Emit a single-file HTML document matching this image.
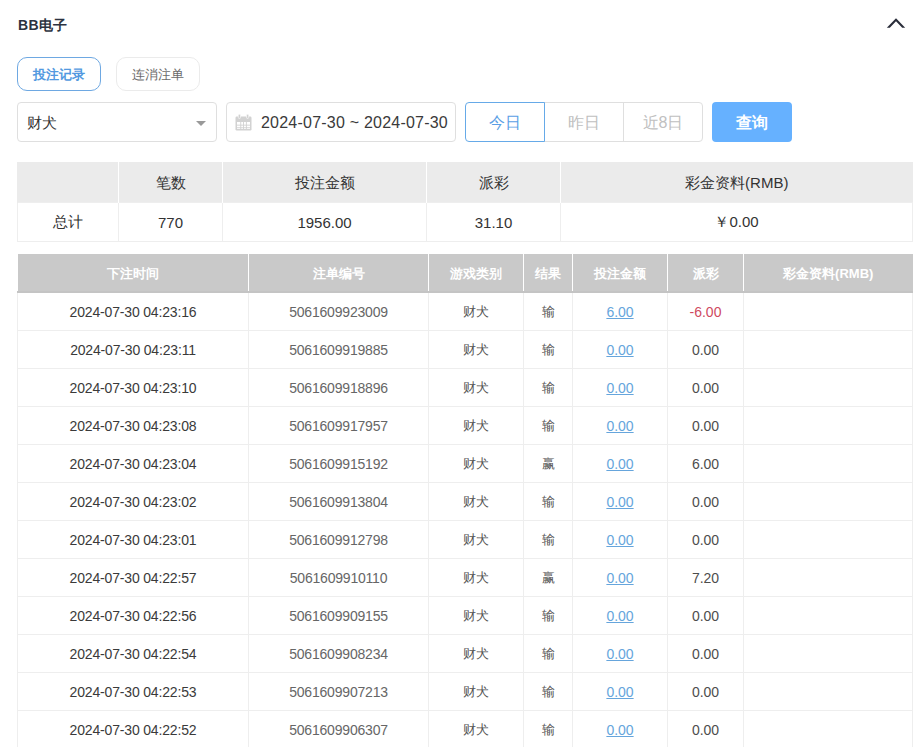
<!DOCTYPE html>
<html><head><meta charset="utf-8">
<style>
*{box-sizing:border-box;margin:0;padding:0}
html,body{width:916px;height:747px;overflow:hidden;background:#fff;font-family:"Liberation Sans",sans-serif;color:#333}
.abs{position:absolute}
.title{left:18px;top:15px;font-size:14px;font-weight:bold;letter-spacing:0.3px;color:#2c3240;line-height:20px}
.chev{left:886px;top:17px}
.tab{top:57px;width:84px;height:34px;border-radius:10px;font-size:13px;line-height:33px;text-align:center}
.tab1{left:17px;border:1px solid #6ea8e2;color:#5299e0;font-weight:bold}
.tab2{left:116px;border:1px solid #ebebeb;color:#6a6a6a}
.sel{left:17px;top:102px;width:200px;height:40px;border:1px solid #dfdfdf;border-radius:4px;font-size:15px;line-height:39px;padding-left:9px;color:#333}
.tri{left:196px;top:121px;width:0;height:0;border-left:5px solid transparent;border-right:5px solid transparent;border-top:5px solid #999}
.date{left:226px;top:102px;width:230px;height:40px;border:1px solid #dfdfdf;border-radius:4px}
.datetxt{left:261px;top:103px;font-size:16px;line-height:40px;color:#3a3a3a;white-space:nowrap;letter-spacing:0.22px}
.seg{top:102px;height:40px;font-size:16px;line-height:40px;text-align:center;color:#c0c0c0;border:1px solid #dfdfdf}
.query{left:712px;top:102px;width:80px;height:40px;border-radius:4px;background:#66b1ff;color:#fff;font-size:16px;line-height:41px;text-align:center;font-weight:bold}
table{border-collapse:collapse;table-layout:fixed;position:absolute;left:17px;width:895px}
td,th{text-align:center;white-space:nowrap;padding:0}
.sum{top:162px}
.sum th{background:#ebebeb;height:40px;font-weight:normal;font-size:15px;color:#333;border-left:1px solid #fff;padding-top:4px}
.sum th:first-child{border-left:1px solid #ebebeb}
.sum td{height:39px;font-size:15px;color:#333;border:1px solid #eeeeee;padding-top:1px}
.main{top:254px}
.main th{background:#c9c9c9;height:38px;font-size:13px;color:#fff;border-left:1px solid #fff;padding-top:3px;border-bottom:2px solid #c4c4c4}
.main th:first-child{border-left:none}
.main td{height:38px;font-size:14px;color:#333;border:1px solid #eeeeee;padding-top:2px}
.main td.dt{letter-spacing:-0.17px}
.main td.id{color:#666;letter-spacing:-0.2px}
.main td.cn{font-size:13px;color:#555}
.main td.dt{color:#3a3a3a}
.main td a{color:#66a5dc;text-decoration:underline}
.main td.po{color:#4d4d4d}
.neg{color:#cf4a5f !important}
</style></head><body>
<div class="abs title">BB电子</div>
<svg class="abs" style="left:876px;top:10px" width="40" height="30" viewBox="0 0 40 30"><polygon points="10.8,17.8 20,8.2 29.2,17.8 26.2,17.8 20,11.3 13.8,17.8" fill="#2a2d3a"/></svg>
<div class="abs tab tab1">投注记录</div>
<div class="abs tab tab2">连消注单</div>

<div class="abs sel">财犬</div>
<div class="abs tri"></div>
<div class="abs date"></div>
<svg class="abs" style="left:235px;top:114px" width="17" height="17" viewBox="0 0 17 17">
<rect x="0.5" y="2.5" width="16" height="14" rx="1.2" fill="#d2d2d2"/>
<rect x="2" y="8" width="13" height="7" fill="#fff"/>
<rect x="2" y="8" width="13" height="7" fill="none"/>
<g fill="#d2d2d2"><rect x="2" y="10.7" width="13" height="0.9"/><rect x="2" y="13.3" width="13" height="0.9"/><rect x="5.3" y="8" width="0.9" height="7"/><rect x="8.1" y="8" width="0.9" height="7"/><rect x="10.9" y="8" width="0.9" height="7"/></g>
<rect x="3.3" y="0.3" width="2.2" height="4.2" rx="1.1" fill="#d2d2d2" stroke="#fff" stroke-width="0.6"/>
<rect x="11.5" y="0.3" width="2.2" height="4.2" rx="1.1" fill="#d2d2d2" stroke="#fff" stroke-width="0.6"/>
</svg>
<div class="abs datetxt">2024-07-30 ~ 2024-07-30</div>
<div class="abs seg" style="left:465px;width:80px;border-color:#66aae8;color:#5a9fe6;border-radius:4px 0 0 4px;z-index:2">今日</div>
<div class="abs seg" style="left:544px;width:80px;border-left:none;border-right:none">昨日</div>
<div class="abs seg" style="left:623px;width:80px;border-radius:0 4px 4px 0">近8日</div>
<div class="abs query">查询</div>

<table class="sum">
<colgroup><col style="width:101px"><col style="width:104px"><col style="width:204px"><col style="width:134px"><col style="width:352px"></colgroup>
<tr><th></th><th>笔数</th><th>投注金额</th><th>派彩</th><th>彩金资料(RMB)</th></tr>
<tr><td>总计</td><td>770</td><td>1956.00</td><td>31.10</td><td>￥0.00</td></tr>
</table>

<table class="main">
<colgroup><col style="width:231px"><col style="width:180px"><col style="width:95px"><col style="width:49px"><col style="width:95px"><col style="width:76px"><col style="width:169px"></colgroup>
<tr><th>下注时间</th><th>注单编号</th><th>游戏类别</th><th>结果</th><th>投注金额</th><th>派彩</th><th>彩金资料(RMB)</th></tr>
<tr><td class="dt">2024-07-30 04:23:16</td><td class="id">5061609923009</td><td class="cn">财犬</td><td class="cn">输</td><td><a>6.00</a></td><td class="neg">-6.00</td><td></td></tr>
<tr><td class="dt">2024-07-30 04:23:11</td><td class="id">5061609919885</td><td class="cn">财犬</td><td class="cn">输</td><td><a>0.00</a></td><td class="po">0.00</td><td></td></tr>
<tr><td class="dt">2024-07-30 04:23:10</td><td class="id">5061609918896</td><td class="cn">财犬</td><td class="cn">输</td><td><a>0.00</a></td><td class="po">0.00</td><td></td></tr>
<tr><td class="dt">2024-07-30 04:23:08</td><td class="id">5061609917957</td><td class="cn">财犬</td><td class="cn">输</td><td><a>0.00</a></td><td class="po">0.00</td><td></td></tr>
<tr><td class="dt">2024-07-30 04:23:04</td><td class="id">5061609915192</td><td class="cn">财犬</td><td class="cn">赢</td><td><a>0.00</a></td><td class="po">6.00</td><td></td></tr>
<tr><td class="dt">2024-07-30 04:23:02</td><td class="id">5061609913804</td><td class="cn">财犬</td><td class="cn">输</td><td><a>0.00</a></td><td class="po">0.00</td><td></td></tr>
<tr><td class="dt">2024-07-30 04:23:01</td><td class="id">5061609912798</td><td class="cn">财犬</td><td class="cn">输</td><td><a>0.00</a></td><td class="po">0.00</td><td></td></tr>
<tr><td class="dt">2024-07-30 04:22:57</td><td class="id">5061609910110</td><td class="cn">财犬</td><td class="cn">赢</td><td><a>0.00</a></td><td class="po">7.20</td><td></td></tr>
<tr><td class="dt">2024-07-30 04:22:56</td><td class="id">5061609909155</td><td class="cn">财犬</td><td class="cn">输</td><td><a>0.00</a></td><td class="po">0.00</td><td></td></tr>
<tr><td class="dt">2024-07-30 04:22:54</td><td class="id">5061609908234</td><td class="cn">财犬</td><td class="cn">输</td><td><a>0.00</a></td><td class="po">0.00</td><td></td></tr>
<tr><td class="dt">2024-07-30 04:22:53</td><td class="id">5061609907213</td><td class="cn">财犬</td><td class="cn">输</td><td><a>0.00</a></td><td class="po">0.00</td><td></td></tr>
<tr><td class="dt">2024-07-30 04:22:52</td><td class="id">5061609906307</td><td class="cn">财犬</td><td class="cn">输</td><td><a>0.00</a></td><td class="po">0.00</td><td></td></tr>
</table>
</body></html>
